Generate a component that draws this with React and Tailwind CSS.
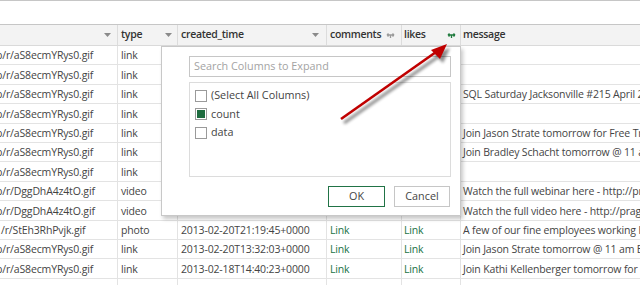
import React from "react";

const rows = [
  { url: "p/r/aS8ecmYRys0.gif", type: "link", time: "", c: "", l: "", msg: "" },
  { url: "p/r/aS8ecmYRys0.gif", type: "link", time: "", c: "", l: "", msg: "" },
  { url: "p/r/aS8ecmYRys0.gif", type: "link", time: "", c: "", l: "", msg: "SQL Saturday Jacksonville #215 April 27" },
  { url: "p/r/aS8ecmYRys0.gif", type: "link", time: "", c: "", l: "", msg: "" },
  { url: "p/r/aS8ecmYRys0.gif", type: "link", time: "", c: "", l: "", msg: "Join Jason Strate tomorrow for Free Training" },
  { url: "p/r/aS8ecmYRys0.gif", type: "link", time: "", c: "", l: "", msg: "Join Bradley Schacht tomorrow @ 11 am" },
  { url: "p/r/aS8ecmYRys0.gif", type: "link", time: "", c: "", l: "", msg: "" },
  { url: "p/r/DggDhA4z4tO.gif", type: "video", time: "", c: "", l: "", msg: "Watch the full webinar here - http://pragmaticworks" },
  { url: "p/r/DggDhA4z4tO.gif", type: "video", time: "", c: "", l: "", msg: "Watch the full video here - http://pragmaticworks" },
  { url: "/r/StEh3RhPvjk.gif", type: "photo", time: "2013-02-20T21:19:45+0000", c: "Link", l: "Link", msg: "A few of our fine employees working hard", s: true },
  { url: "p/r/aS8ecmYRys0.gif", type: "link", time: "2013-02-20T13:32:03+0000", c: "Link", l: "Link", msg: "Join Jason Strate tomorrow @ 11 am EST" },
  { url: "p/r/aS8ecmYRys0.gif", type: "link", time: "2013-02-18T14:40:23+0000", c: "Link", l: "Link", msg: "Join Kathi Kellenberger tomorrow for Free" },
  { url: "", type: "", time: "", c: "", l: "", msg: "" },
];

function Caret() {
  return (
    <svg width="7" height="4" viewBox="0 0 7 4" className="shrink-0">
      <path d="M0 0 L7 0 L3.5 4 Z" fill="#8a8a8a" />
    </svg>
  );
}

function ExpandIcon({ color }) {
  return (
    <svg width="9" height="7" viewBox="0 0 9 7" className="shrink-0">
      <path d="M4.5 6 L4.5 3 M4.5 3 L1 3 M1 3 L2.5 1.5 M1 3 L2.5 4.5 M4.5 3 L8 3 M8 3 L6.5 1.5 M8 3 L6.5 4.5" stroke={color} strokeWidth="1.3" fill="none" />
    </svg>
  );
}

function Checkbox({ checked }) {
  return (
    <div className="w-[12px] h-[12px] border border-[#9a9a9a] bg-white flex items-center justify-center shrink-0">
      {checked && <div className="w-[8px] h-[8px] bg-[#1d6b3e]" />}
    </div>
  );
}

export default function App() {
  return (
    <div
      className="relative w-[640px] h-[285px] overflow-hidden bg-white text-[#444]"
      style={{ fontFamily: '"Open Sans", "Noto Sans", sans-serif' }}
    >
      <div className="h-[25px] border-t border-b border-[#c6c6c6]" />
      {/* header */}
      <div className="flex h-[21px] bg-[#f3f3f3] border-b border-[#dadada] text-[10.5px] font-semibold tracking-[-0.3px] text-[#333]">
        <div className="w-[118px] flex items-center justify-end pr-[6px] border-r border-[#dcdcdc]">
          <Caret />
        </div>
        <div className="w-[60px] flex items-center justify-between pl-[3px] pr-[5px] border-r border-[#dcdcdc]">
          <span>type</span>
          <Caret />
        </div>
        <div className="w-[149px] flex items-center justify-between pl-[3px] pr-[7px] border-r border-[#dcdcdc]">
          <span>created_time</span>
          <Caret />
        </div>
        <div className="w-[75px] flex items-center justify-between pl-[3px] pr-[6px] border-r border-[#dcdcdc]">
          <span>comments</span>
          <ExpandIcon color="#9a9a9a" />
        </div>
        <div className="w-[59px] flex items-center justify-between pl-[2px] pr-[4px] border-r border-[#dcdcdc]">
          <span>likes</span>
          <ExpandIcon color="#1e7a3c" />
        </div>
        <div className="flex-1 flex items-center pl-[2px]">
          <span>message</span>
        </div>
      </div>
      {/* rows */}
      {rows.map((r, i) => (
        <div key={i} className="flex h-[19.4px] border-b border-[#e3e3e3] text-[10.5px] tracking-[-0.15px] leading-none whitespace-nowrap">
          <div className="w-[118px] overflow-hidden flex items-center pt-[1px] border-r border-[#e3e3e3]">
            <span className={r.s ? "ml-[1px]" : "ml-[-4px]"}>{r.url}</span>
          </div>
          <div className="w-[60px] flex items-center pl-[3px] pt-[1px] border-r border-[#e3e3e3]">{r.type}</div>
          <div className="w-[149px] flex items-center pl-[3px] pt-[1px] border-r border-[#e3e3e3]">{r.time}</div>
          <div className="w-[75px] flex items-center pl-[3px] pt-[1px] border-r border-[#e3e3e3] text-[#217346]">{r.c}</div>
          <div className="w-[59px] flex items-center pl-[2px] pt-[1px] border-r border-[#e3e3e3] text-[#217346]">{r.l}</div>
          <div className="flex-1 overflow-hidden flex items-center pl-[2px] pt-[1px]">{r.msg}</div>
        </div>
      ))}
      {/* dialog */}
      <div className="absolute left-[161px] top-[46px] w-[300px] h-[170px] bg-white border border-[#c8c8c8] shadow-[2px_3px_4px_rgba(0,0,0,0.22)] text-[10.8px]">
        <div className="ml-[27px] mt-[9px] w-[262px] h-[21px] border border-[#c6c6c6] flex items-center pl-[4px] text-[#a3a3a3]">
          Search Columns to Expand
        </div>
        <div className="ml-[27px] mt-[5px] w-[262px] h-[95px] border border-[#dcdcdc] pt-[3px] pl-[5px] text-[#444]">
          <div className="flex items-center gap-[4px] h-[19px]">
            <Checkbox />
            <span>(Select All Columns)</span>
          </div>
          <div className="flex items-center gap-[4px] h-[18px]">
            <Checkbox checked />
            <span>count</span>
          </div>
          <div className="flex items-center gap-[4px] h-[19px]">
            <Checkbox />
            <span>data</span>
          </div>
        </div>
        <div className="flex justify-end gap-[9px] mt-[9px] mr-[10px]">
          <div className="w-[57px] h-[21px] border border-[#217346] flex items-center justify-center">OK</div>
          <div className="w-[56px] h-[21px] border border-[#c6c6c6] flex items-center justify-center">Cancel</div>
        </div>
      </div>
      {/* arrow */}
      <svg className="absolute left-0 top-0" width="640" height="285" viewBox="0 0 640 285">
        <defs>
          <filter id="sh" x="-20%" y="-20%" width="140%" height="140%">
            <feGaussianBlur stdDeviation="1.6" />
          </filter>
        </defs>
        <g transform="translate(3,4)" filter="url(#sh)" opacity="0.45">
          <line x1="341" y1="119" x2="436" y2="52" stroke="#000" strokeWidth="3" />
          <polygon points="447,44 431,50 440,59" fill="#000" />
        </g>
        <line x1="341" y1="119" x2="436" y2="52" stroke="#c00000" strokeWidth="2.6" />
        <polygon points="447,44 431,50 440,59" fill="#c00000" />
      </svg>
    </div>
  );
}
